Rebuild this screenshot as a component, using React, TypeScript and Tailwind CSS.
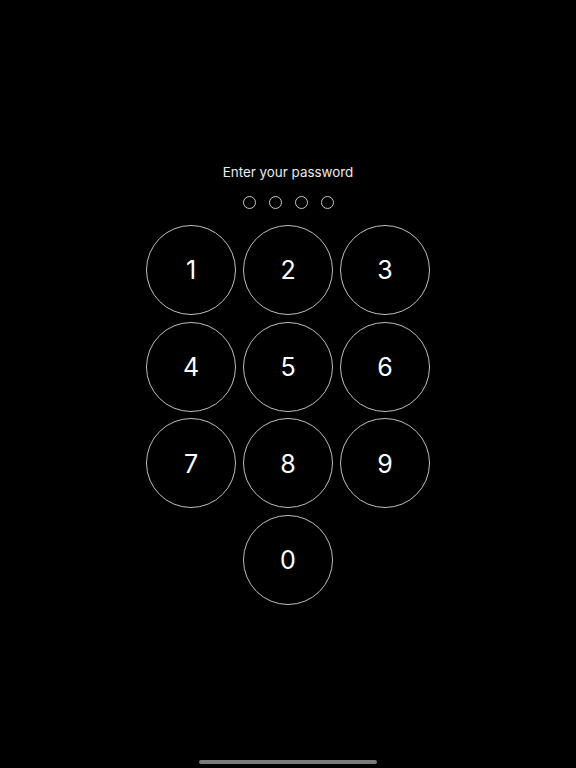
export default function App() {
  const keys = ["1", "2", "3", "4", "5", "6", "7", "8", "9"];

  return (
    <div
      className="relative h-[768px] w-full overflow-hidden bg-black text-white"
      style={{ fontFamily: "Inter, 'Liberation Sans', sans-serif" }}
    >
      <div className="flex flex-col items-center pt-[162px]">
        <p className="text-[13.4px] leading-[20px] text-[#ececec]">Enter your password</p>

        {/* entered digits */}
        <div className="mt-[14px] flex gap-[13px]">
          {[0, 1, 2, 3].map((i) => (
            <span key={i} className="h-[13px] w-[13px] rounded-full border border-[#c8c8c8]" />
          ))}
        </div>

        {/* keypad */}
        <div className="mt-[16px] grid grid-cols-[90px_90px_90px] gap-x-[7px] gap-y-[6.7px]">
          {keys.map((k) => (
            <button
              key={k}
              className="flex h-[90px] w-[90px] items-center justify-center rounded-full border border-[#bdbdbd] pt-[2px] text-[25px] text-white"
            >
              {k}
            </button>
          ))}
          <div />
          <button className="flex h-[90px] w-[90px] items-center justify-center rounded-full border border-[#bdbdbd] pt-[2px] text-[25px] text-white">
            0
          </button>
        </div>
      </div>

      {/* home indicator */}
      <div className="absolute bottom-[4px] left-1/2 h-[4px] w-[178px] -translate-x-1/2 rounded-full bg-[#7a7a7a]" />
    </div>
  );
}
